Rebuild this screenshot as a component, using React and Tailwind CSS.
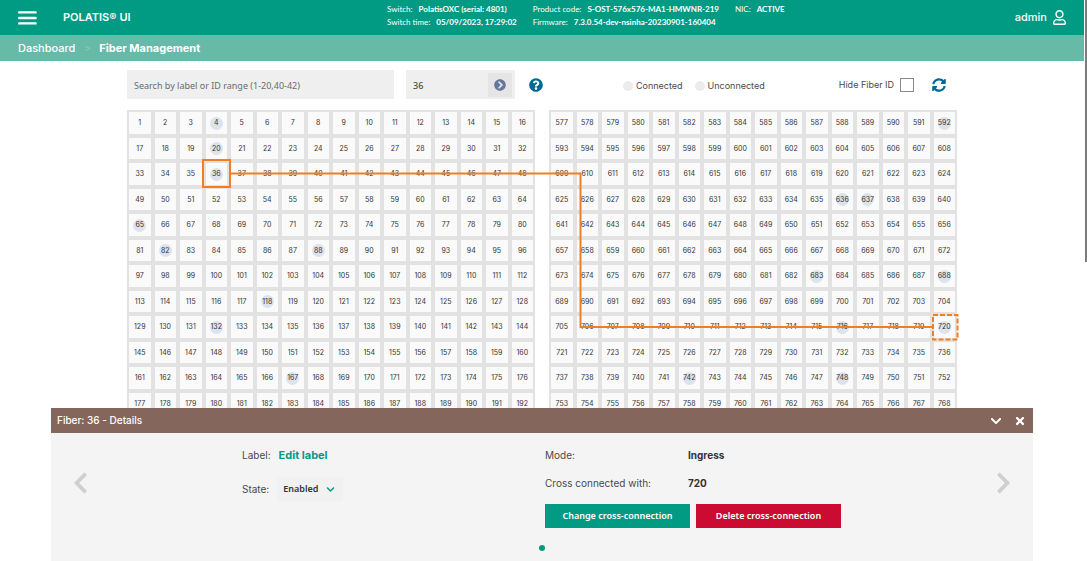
import React, { useState } from 'react';
import {
    FaRegUser,
    FaChevronCircleRight,
    FaQuestionCircle,
    FaSyncAlt,
    FaChevronDown,
    FaChevronLeft,
    FaChevronRight,
    FaTimes
} from 'react-icons/fa';

const COLUMNS = 16;
const ROWS = 12;

const CONNECTED = [
    4, 20, 36, 65, 82, 88, 118, 132, 167,
    592, 636, 637, 683, 688, 716, 720, 742, 748
];

const InfoItem = ({ label, value }) => (
    <div className="flex gap-1.5 whitespace-nowrap">
        <span>{label}</span>
        <span className="font-bold">{value}</span>
    </div>
);

const Header = () => (
    <header className="flex h-[35px] items-center bg-[#009b82] pr-[18px] text-white">
        <div className="flex w-[387px] shrink-0 items-center gap-[26px] pl-[18px]">
            <button type="button" aria-label="Menu">
                <svg className="h-[14px] w-[19px]" viewBox="0 0 19 14" fill="none" stroke="currentColor" strokeWidth="2.4" strokeLinecap="round">
                    <path d="M1.2 1.4h16.4M1.2 7h16.4M1.2 12.4h16.4" />
                </svg>
            </button>
            <h1 className="text-[11px] font-semibold">POLATIS® UI</h1>
        </div>
        <div className="mb-1 flex gap-4 font-[Lato,sans-serif] text-[8px] leading-[13px]">
            <div>
                <InfoItem label="Switch:" value="PolatisOXC (serial: 4801)" />
                <InfoItem label="Switch time:" value="05/09/2023, 17:29:02" />
            </div>
            <div>
                <InfoItem label="Product code:" value="S-OST-576x576-MA1-HMWNR-219" />
                <InfoItem label="Firmware:" value="7.3.0.54-dev-nsinha-20230901-160404" />
            </div>
            <div>
                <InfoItem label="NIC:" value="ACTIVE" />
            </div>
        </div>
        <button type="button" className="ml-auto flex items-center gap-1.5 text-[11px] font-medium">
            admin
            <FaRegUser className="h-[15px] w-[13px]" />
        </button>
    </header>
);

const Breadcrumb = () => (
    <nav className="flex h-[26px] items-center gap-[9px] bg-[#67b9a8] pl-[18px] text-[11px] text-white">
        <a href="#dashboard" className="font-medium">Dashboard</a>
        <span className="text-[9px] text-[#93cdc1]">&gt;</span>
        <a href="#fibers" className="font-bold">Fiber Management</a>
    </nav>
);

const Toolbar = ({ hideIds, onHideIds }) => (
    <div className="flex h-[29px] items-center text-[9px] text-[#4a4a4a]">
        <input
            type="text"
            aria-label="Search fibers"
            placeholder="Search by label or ID range (1-20,40-42)"
            className="h-full w-[267px] bg-[#efefef] px-[7px] pt-0.5 font-['Noto_Sans',sans-serif] outline-none placeholder:text-[#6b6b6b]"
        />
        <div className="ml-3 flex h-full w-[109px] items-center bg-[#efefef] pr-[3px]">
            <input
                type="text"
                aria-label="Go to fiber"
                defaultValue="36"
                className="min-w-0 flex-1 px-[7px] pt-0.5 font-['Noto_Sans',sans-serif] font-medium outline-none"
            />
            <button type="button" aria-label="Go" className="flex size-6 items-center justify-center bg-[#e5e5e5] text-[#66779b]">
                <FaChevronCircleRight className="size-3" />
            </button>
        </div>
        <button type="button" aria-label="Help" className="ml-[14px] text-[#006a93]">
            <FaQuestionCircle className="size-[14px]" />
        </button>
        <div className="ml-auto flex gap-3 pt-0.5">
            <span className="flex items-center gap-[3px]">
                <span className="size-[10px] rounded-full bg-[#ececec]" />
                Connected
            </span>
            <span className="flex items-center gap-[3px]">
                <span className="size-[10px] rounded-full bg-[#ececec]" />
                Unconnected
            </span>
        </div>
        <label className="ml-[74px] flex items-center gap-1.5">
            Hide Fiber ID
            <input
                type="checkbox"
                checked={hideIds}
                onChange={onHideIds}
                className="size-[14px] appearance-none border border-[#8a8a8a] bg-white checked:bg-[#009b82]"
            />
        </label>
        <button type="button" aria-label="Refresh" className="mr-[11px] ml-[18px] text-[#006a93]">
            <FaSyncAlt className="size-[14px]" />
        </button>
    </div>
);

const FiberGrid = ({ first, hideIds }) => (
    <div className="grid flex-1 grid-cols-16 bg-[#e2e2e2]">
        {Array.from({ length: COLUMNS * ROWS }, (_, i) => first + i).map(id => (
            <button
                key={id}
                type="button"
                aria-label={`Fiber ${id}`}
                className="flex aspect-square min-w-0 items-center justify-center border-2 border-[#e2e2e2] bg-[#fafafa] pt-px text-[7px] text-[#333]"
            >
                <span className={CONNECTED.includes(id)
                    ? 'flex size-[13px] items-center justify-center rounded-full bg-[#dde3ec]'
                    : ''}
                >
                    {hideIds ? '' : id}
                </span>
            </button>
        ))}
    </div>
);

// Path between the selected ingress fiber and its egress fiber
const Connection = () => (
    <svg
        className="pointer-events-none absolute top-0 left-0 w-full overflow-visible"
        viewBox="0 0 830 306"
        fill="none"
        stroke="#f07f23"
        strokeWidth="2"
    >
        <rect x="76" y="50" width="27" height="27" />
        <path d="M104 63.5H453.5V217H805" strokeWidth="2" />
        <rect x="806" y="205" width="24.5" height="24.5" strokeDasharray="5 2" />
    </svg>
);

const DetailsPanel = () => (
    <section className="absolute inset-x-[51px] bottom-0 h-[153px] bg-[#f4f4f4] text-[10px] text-[#4a4a4a]">
        <div className="flex h-[25px] items-center bg-[#84665c] px-[6px] text-white">
            <h2 className="font-medium">Fiber: 36 - Details</h2>
            <button type="button" aria-label="Collapse" className="ml-auto">
                <FaChevronDown className="size-3" />
            </button>
            <button type="button" aria-label="Close" className="mr-px ml-3">
                <FaTimes className="size-3" />
            </button>
        </div>
        <div className="flex h-[100px] items-center justify-between px-[22px]">
            <button type="button" aria-label="Previous fiber" className="text-[#cfcfcf]">
                <FaChevronLeft className="h-6 w-[15px]" />
            </button>
            <div className="flex flex-1 self-start pt-3 pl-[154px]">
                <div className="w-[303px] space-y-3">
                    <div className="flex h-5 items-center gap-2">
                        <span>Label:</span>
                        <button type="button" className="text-[11px] font-bold text-[#009b82]">Edit label</button>
                    </div>
                    <div className="flex h-6 items-center gap-2">
                        <label htmlFor="state">State:</label>
                        <div className="relative">
                            <select
                                id="state"
                                className="h-6 w-[66px] appearance-none bg-[#f1f1f1] pl-1.5 font-['Noto_Sans',sans-serif] text-[9px] font-semibold text-[#333] outline-none"
                            >
                                <option>Enabled</option>
                                <option>Disabled</option>
                            </select>
                            <FaChevronDown className="pointer-events-none absolute top-2 right-2 size-[9px] text-[#009b82]" />
                        </div>
                    </div>
                </div>
                <div>
                    <dl className="grid grid-cols-[143px_auto] gap-y-2">
                        <dt className="flex h-5 items-center">Mode:</dt>
                        <dd className="flex h-5 items-center font-bold text-[#333]">Ingress</dd>
                        <dt className="flex h-5 items-center">Cross connected with:</dt>
                        <dd className="flex h-5 items-center font-bold text-[#333]">720</dd>
                    </dl>
                    <div className="mt-[11px] flex gap-[6px] font-['Noto_Sans',sans-serif] text-[9px] font-semibold text-white">
                        <button type="button" className="h-6 w-[145px] bg-[#009b82]">Change cross-connection</button>
                        <button type="button" className="h-6 w-[145px] bg-[#cc0b33]">Delete cross-connection</button>
                    </div>
                </div>
            </div>
            <button type="button" aria-label="Next fiber" className="text-[#cfcfcf]">
                <FaChevronRight className="h-6 w-[15px]" />
            </button>
        </div>
        <div className="mt-[12px] flex justify-center">
            <span className="size-[6px] rounded-full bg-[#009b82]" />
        </div>
    </section>
);

const App = () => {
    const [hideIds, setHideIds] = useState(false);

    return (
        <div className="flex h-screen overflow-hidden bg-white font-[Inter,sans-serif]">
            <div className="relative flex min-w-0 flex-1 flex-col overflow-hidden">
                <Header />
                <Breadcrumb />
                <main className="mx-auto w-full max-w-[830px] pt-[9px]">
                    <Toolbar hideIds={hideIds} onHideIds={() => setHideIds(!hideIds)} />
                    <div className="relative mt-[11px] flex gap-[14px]">
                        <FiberGrid first={1} hideIds={hideIds} />
                        <FiberGrid first={577} hideIds={hideIds} />
                        <Connection />
                    </div>
                </main>
                <DetailsPanel />
            </div>
            <div className="w-[3px] pl-px">
                <div className="h-[262px] bg-[#7d7d7d]" />
            </div>
        </div>
    );
};

export default App;
